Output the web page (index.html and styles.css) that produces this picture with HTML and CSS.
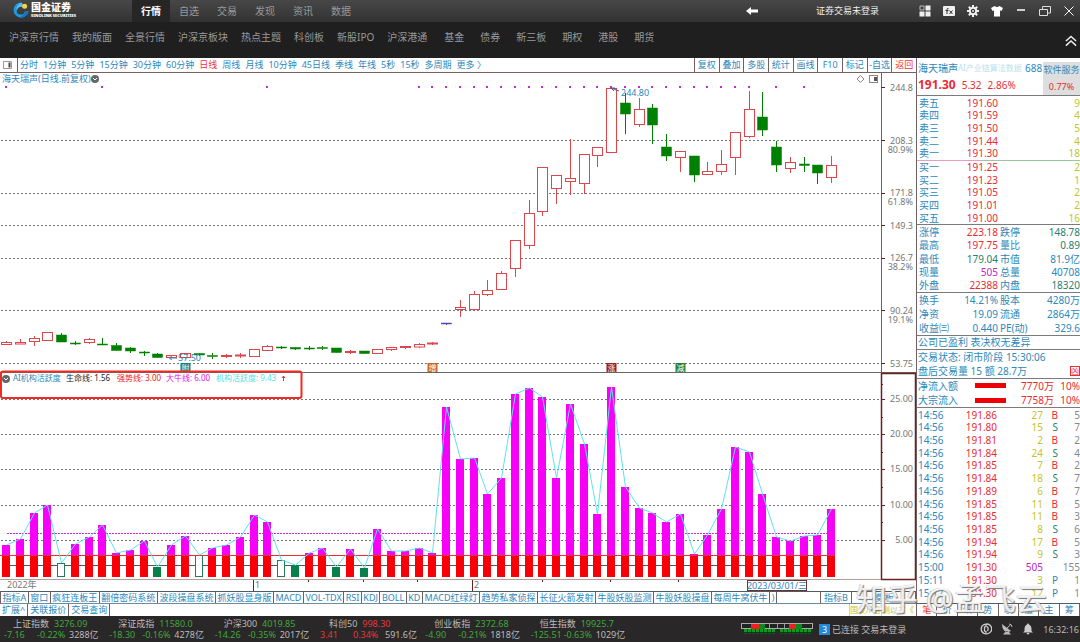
FILE: index.html
```html
<!DOCTYPE html>
<html lang="zh-CN">
<head>
<meta charset="utf-8">
<title>国金证券 - 海天瑞声</title>
<link rel="stylesheet" href="styles.css">
</head>
<body>
<header class="titlebar">
  <div class="brand">
    <svg class="brand-mark" viewBox="0 0 16 16" aria-hidden="true">
      <path d="M8 .5A7.5 7.5 0 1 0 15.5 9L12 9A4.2 4.2 0 1 1 8 4.2Q9 1.500 8 .5Z" fill="#1c9be0"/>
      <path d="M8 .5Q11 2 9 5A4 4 0 0 0 4.500 11Q1 5 8 .5Z" fill="#55c0f4"/>
      <path d="M15.500 9A7.500 7.500 0 0 1 5 15Q11 15 12 9Z" fill="#1477be"/>
      <circle cx="11.600" cy="4.200" r="2.500" fill="#f3d34a"/>
    </svg>
    <div class="brand-text"><strong>国金证券</strong><span>SINOLINK SECURITIES</span></div>
  </div>
  <nav class="main-tabs">
    <a class="active" href="#">行情</a><a href="#">自选</a><a href="#">交易</a><a href="#">发现</a><a href="#">资讯</a><a href="#">数据</a>
  </nav>
  <div class="title-right">
    <button class="icon back" aria-label="返回"><svg viewBox="0 0 12 10"><path d="M0 5L5 1V3.500H12V6.500H5V9Z" fill="#fff"/></svg></button>
    <span class="login">证券交易未登录</span>
    <div class="tools">
      <button class="icon" aria-label="布局"><svg viewBox="0 0 12 12"><path d="M6.500 .5h5v5h-5zM.5 6.500h5v5h-5zM6.500 6.500h5v5h-5z" fill="#eee"/><path d="M1 1h4v4h-4z" fill="none" stroke="#bbb"/></svg></button>
      <button class="icon" aria-label="公式"><svg viewBox="0 0 12 12"><rect y="1" width="12" height="10" rx="1" fill="#eee"/><path d="M5.500 3.500Q4 3 4 4.500V9M2.500 5.500H5.500M6.500 5.500L9.500 9M9.500 5.500L6.500 9" stroke="#333" fill="none"/></svg></button>
      <button class="icon" aria-label="设置"><svg viewBox="0 0 12 12"><circle cx="6" cy="6" r="3.200" fill="none" stroke="#eee" stroke-width="2"/><path d="M6 0V2.500M6 9.500V12M0 6H2.500M9.500 6H12M1.800 1.800L3.500 3.500M8.500 8.500L10.200 10.200M10.200 1.800L8.500 3.500M3.500 8.500L1.800 10.200" stroke="#eee" stroke-width="2"/><circle cx="6" cy="6" r="1" fill="#ddd"/></svg></button>
      <button class="icon" aria-label="皮肤"><svg viewBox="0 0 12 12"><path d="M3.500 1Q6 3 8.500 1L12 3L10.500 6L9 5.500V11.500H3V5.500L1.500 6L0 3Z" fill="#fff"/></svg></button>
      <button class="icon" aria-label="最小化"><svg viewBox="0 0 12 12"><path d="M2 5H10" stroke="#fff" stroke-width="1.500"/></svg></button>
      <button class="icon" aria-label="还原"><svg viewBox="0 0 12 12"><path d="M.5 4.500H8.500V10.500H.5ZM3.500 4V1.500H11.500V8H9" fill="none" stroke="#ddd"/></svg></button>
      <button class="icon" aria-label="关闭"><svg viewBox="0 0 12 12"><path d="M1.500 1.500L10.500 10.500M10.500 1.500L1.500 10.500" stroke="#fff"/></svg></button>
    </div>
  </div>
</header>

<nav class="subnav">
  <div class="group tight"><a href="#">沪深京行情</a><a href="#">我的版面</a><a href="#">全景行情</a><a href="#">沪深京板块</a><a href="#">热点主题</a><a href="#">科创板</a><a href="#">新股IPO</a><a href="#">沪深港通</a></div>
  <div class="group wide"><a href="#">基金</a><a href="#">债券</a><a href="#">新三板</a><a href="#">期权</a><a href="#">港股</a><a href="#">期货</a></div>
  <button class="icon collapse" aria-label="收起"><svg viewBox="0 0 13 12"><path d="M1 6L6.500 1L12 6M1 11L6.500 6L12 11" stroke="#eee" stroke-width="1.600" fill="none"/></svg></button>
</nav>

<main class="workspace">
  <section class="left">
    <div class="periods">
      <button class="panel-toggle" aria-label="侧栏"><svg viewBox="0 0 10 10"><path d="M.5 1.500H8.500V8.500H.5Z" fill="none" stroke="#999"/><path d="M5.500 2.500H7.500V7.500H5.500Z" fill="#444"/></svg></button>
      <div class="period-list">
        <button>分时</button><button>1分钟</button><button>5分钟</button><button>15分钟</button><button>30分钟</button><button>60分钟</button><button class="on">日线</button><button>周线</button><button>月线</button><button>10分钟</button><button>45日线</button><button>季线</button><button>年线</button><button>5秒</button><button>15秒</button><button>多周期</button><button>更多 〉</button>
      </div>
      <div class="actions">
        <button>复权</button><button>叠加</button><button>多股</button><button>统计</button><button>画线</button><button>F10</button><button>标记</button><button>-自选</button><button class="on">返回</button>
      </div>
    </div>
    <svg class="chart" id="chart" viewBox="0 73 916 518" role="img" aria-label="海天瑞声日线与AI机构活跃度"></svg>
    <div class="tabs">
      <div class="tab-list">
        <button>指标A</button><button>窗口</button><button>疯狂连板王</button><button>翻倍密码系统</button><button>波段操盘系统</button><button>抓妖股显身版</button><button>MACD</button><button>VOL-TDX</button><button>RSI</button><button>KDJ</button><button>BOLL</button><button>KD</button><button>MACD红绿灯</button><button>趋势私家侦探</button><button>长征火箭发射</button><button>牛股妖股监测</button><button>牛股妖股操盘</button><button>每周牛窝伏牛</button><button>)</button>
      </div>
      <div class="tab-end"><button>指标B</button><button>模 板</button></div>
    </div>
    <div class="tabs second">
      <div class="ext"><button>扩展^</button><button>关联报价</button><button>交易查询</button></div>
      <div class="ticker"><span>国发//相</span><span>测以主《</span></div>
    </div>
  </section>

  <aside class="quote">
    <div class="head">
      <div class="head-main">
        <div class="name"><b>海天瑞声</b><i>AI产业链算法数据</i><span>688</span></div>
        <div class="price"><strong>191.30</strong><span>5.32</span><span>2.86%</span></div>
      </div>
      <div class="sector"><span>软件服务</span><em>0.77%</em></div>
    </div>
    <div class="sec sell"><table class="book" id="sell"></table></div>
    <div class="sec buy"><table class="book" id="buy"></table></div>
    <div class="sec stats"><table class="facts">
      <tr><th>涨停</th><td class="red">223.18</td><th>跌停</th><td class="teal">148.78</td></tr>
      <tr><th>最高</th><td class="red">197.75</td><th>量比</th><td class="teal">0.89</td></tr>
      <tr><th>最低</th><td class="teal">179.04</td><th>市值</th><td>81.9亿</td></tr>
      <tr><th>现量</th><td class="purple">505</td><th>总量</th><td>40708</td></tr>
      <tr><th>外盘</th><td class="red">22388</td><th>内盘</th><td class="teal">18320</td></tr>
    </table></div>
    <div class="sec basics"><table class="facts">
      <tr><th>换手</th><td>14.21%</td><th>股本</th><td>4280万</td></tr>
      <tr><th>净资</th><td>19.09</td><th>流通</th><td>2864万</td></tr>
      <tr><th>收益㈢</th><td>0.440</td><th>PE(动)</th><td>329.6</td></tr>
    </table></div>
    <div class="sec note"><p>公司已盈利 表决权无差异</p></div>
    <div class="sec state"><p>交易状态: 闭市阶段 15:30:06</p><p class="after">盘后交易量 15 额 28.7万 <span class="badge">凶</span></p></div>
    <div class="sec flow">
      <p><span>净流入额</span><i class="bar"></i><b>7770万</b><b>10%</b></p>
      <p><span>大宗流入</span><i class="bar"></i><b>7758万</b><b>10%</b></p>
    </div>
    <div class="sec ticks"><table id="ticks"></table></div>
    <div class="quote-tabs"><button class="on">笔</button><button>价</button><button>细</button><button>势</button><button>联</button><button>值</button><button>主</button><button>筹</button></div>
  </aside>
  <div class="watermark">知乎 @孟飞云</div>
</main>

<footer class="status">
  <div class="indices" id="indices"></div>
  <svg class="meter" viewBox="0 0 72 12" aria-hidden="true">
    <rect x=".5" y=".5" width="71" height="5" fill="#222" stroke="#aaa"/>
    <rect x="10" y="1" width="8" height="5" fill="#f02020"/><rect x="18" y="1" width="6" height="5" fill="#0a8a1e"/>
    <rect x="48" y="1" width="7" height="5" fill="#f02020"/><rect x="55" y="1" width="6" height="5" fill="#0a8a1e"/>
    <path d="M28.500 1V5M36.500 1V5M43.500 1V5" stroke="#999"/>
    <path d="M3 7.500H34M39 7.500H71" stroke="#0b9a20" stroke-width="3" stroke-dasharray="3 1"/><path d="M3 10.500H34M39 10.500H71" stroke="#0a5c18" stroke-dasharray="3 1"/>
  </svg>
  <div class="conn"><b>3</b><span>已连接 交易未登录</span></div>
  <div class="status-icons">
    <button class="icon" aria-label="客服"><svg viewBox="0 0 12 12"><path d="M4 1.500A5 5 0 0 0 4 10.500L6 11V8.500L4.500 8V4L6 3.500V1ZM6.500 1A4.600 4.600 0 0 1 7 10.800M7 3.500Q9 5 7.500 8" fill="none" stroke="#ccc" stroke-width="1.300"/></svg></button>
    <button class="icon" aria-label="信号"><svg viewBox="0 0 12 12"><path d="M1 1L10 8Q6 10 3 7.500Q1 5 1 1ZM5 8L2 11.500H10L8 9Z" fill="#bbb"/><path d="M6 5L9.500 2M8 1Q11 1 11 4" stroke="#bbb" fill="none"/></svg></button>
    <button class="icon" aria-label="提醒"><svg viewBox="0 0 12 12"><path d="M6 .5Q7 .5 7 1.500Q9.500 2.500 9.500 6V8L11 9.500H1L2.500 8V6Q2.500 2.500 5 1.500Q5 .5 6 .5ZM4.500 10H7.500Q7 11.500 6 11.500Q5 11.500 4.500 10Z" fill="#ccc"/></svg></button>
    <time>16:32:16</time>
  </div>
</footer>
<script src="app.js"></script>
</body>
</html>
```
FILE: styles.css
```css
* { box-sizing: border-box; }
:root {
  --blue: #2c88bb;
  --red: #e92b32;
  --line: #75605f;
  --olive: #c2c42c;
  --teal: #2a8070;
}
body {
  margin: 0;
  min-height: 100vh;
  display: flex;
  flex-direction: column;
  background: #fff;
  color: var(--blue);
  font-family: "Noto Sans", "Noto Sans CJK SC", sans-serif;
  font-size: 10px;
  line-height: 12px;
  overflow: hidden;
}
button {
  margin: 0;
  padding: 0;
  border: 0;
  background: none;
  color: inherit;
  font: inherit;
  white-space: nowrap;
}
a { color: inherit; text-decoration: none; }
p { margin: 0; }
.icon { display: flex; align-items: center; justify-content: center; }
.icon svg { width: 12px; height: 12px; display: block; }

.titlebar {
  display: flex;
  height: 22px;
  background: linear-gradient(#474747, #333);
  color: #999;
}
.brand { display: flex; align-items: center; gap: 2px; width: 132px; padding: 0 0 2px 13px; }
.brand-mark { width: 16px; height: 16px; }
.brand-text { display: flex; flex-direction: column; color: #fff; }
.brand-text strong { font-size: 10px; line-height: 11px; font-weight: 900; }
.brand-text span { font-size: 4px; line-height: 5px; font-weight: 900; }
.main-tabs { display: flex; }
.main-tabs a { width: 38px; line-height: 22px; text-align: center; }
.main-tabs .active { background: #262626; color: #fff; font-weight: 700; }
.title-right { margin-left: auto; display: flex; align-items: center; font-size: 9px; color: #eee; }
.login { margin: 0 40px 0 58px; }
.tools { display: flex; gap: 12px; padding-right: 5px; }

.subnav {
  display: flex;
  align-items: center;
  height: 36px;
  padding: 0 3px 6px 9px;
  background: #1f1f1f;
  color: #999;
}
.group { display: flex; }
.tight { gap: 13px; margin-right: 17px; }
.wide { gap: 16px; }
.collapse { margin-left: auto; padding-top: 8px; }

.workspace { position: relative; flex: 1; display: flex; }
.left { flex: 1; min-width: 0; display: flex; flex-direction: column; }
.periods { display: flex; height: 15px; border-bottom: 1px solid var(--line); font-size: 9px; line-height: 14px; }
.panel-toggle { width: 18px; padding-left: 3px; border-right: 1px solid var(--line); display: flex; align-items: center; }
.panel-toggle svg { width: 10px; height: 10px; }
.period-list { display: flex; justify-content: space-between; flex: 0 1 468px; padding-left: 2px; }
.periods .on { color: #f03038; }
.actions { display: grid; grid-template-columns: repeat(9, 1fr); flex: 0 0 222px; margin-left: auto; }
.actions button { border-left: 1px solid var(--line); }
.chart { width: 100%; height: auto; display: block; flex: 1; }
.chart text { font-family: inherit; }

.tabs { display: flex; justify-content: space-between; height: 12px; border-top: 1px solid #505c65; font-size: 9px; line-height: 11px; }
.tabs button { border-right: 1px solid var(--line); }
.tab-list { display: flex; flex: 0 1 777px; border-left: 1px solid var(--line); }
.tab-list button { flex: 1 1 auto; }
.tab-end { display: grid; grid-template-columns: 31px 64px; border-left: 1px solid var(--line); }
.second { height: 13px; line-height: 12px; border-top-color: #6b8c9c; }
.ext { display: flex; }
.ext button { padding: 0 2px; }
.ticker { display: grid; grid-template-columns: 32px 35px; color: var(--olive); }
.ticker span { border-left: 1px solid #d9da85; white-space: nowrap; font-size: 8px; }

.quote { flex: 0 0 164px; display: flex; flex-direction: column; border-left: 1px solid var(--line); overflow: hidden; }
.head { flex: 38 1 0; display: flex; justify-content: space-between; overflow: hidden; }
.head-main { min-width: 0; padding: 4px 0 0 1px; }
.name { display: flex; white-space: nowrap; }
.name b { font-weight: 400; }
.name i { width: 67px; font-style: normal; font-size: 8px; color: #b9e3ec; }
.price { display: flex; align-items: center; gap: 6px; padding-top: 5px; color: var(--red); }
.price strong { font-size: 12px; }
.sector { display: flex; flex-direction: column; justify-content: space-between; flex: 0 0 37px; margin-top: 4px; padding: 2px 0; background: #dedede; text-align: center; font-size: 9px; white-space: nowrap; }
.sector em { font-style: normal; color: var(--red); }
.sec { display: grid; border-top: 1px solid #7b7b7b; min-height: 0; }
table { width: 100%; border-collapse: collapse; }
th, td { padding: 0; font-weight: 400; line-height: 12px; white-space: nowrap; }
th { text-align: left; }
td { text-align: right; }
.sell { flex: 65 1 0; }
.buy { flex: 65 1 0; border-image: linear-gradient(90deg, #ee9cba 40%, #9bc79b 40%) 1; }
.stats { flex: 68 1 0; }
.basics { flex: 43 1 0; }
.note { flex: 13 1 0; }
.state, .flow { flex: 29 1 0; }
.ticks { flex: 195 1 0; padding-bottom: 4px; }
.book th, .facts th:first-child { padding-left: 2px; }
.book td:nth-child(2) { width: 46px; color: var(--red); }
.book td:nth-child(3) { color: var(--olive); }
.book th { width: 35px; }
.facts { table-layout: fixed; }
.facts th:first-child { width: 32px; }
.facts td:nth-child(2) { width: 49px; }
.facts th:nth-child(3) { width: 36px; padding-left: 2px; }
.red { color: var(--red); }
.teal { color: var(--teal); }
.purple { color: #bb28c4; }
.note p, .state p { align-self: center; padding-left: 1px; }
.after { display: flex; justify-content: space-between; align-items: center; }
.badge { font-size: 8px; line-height: 8px; color: var(--red); border: 1px solid; }
.flow p { display: grid; grid-template-columns: 58px 31px 48px 26px; align-items: center; color: var(--red); text-align: right; }
.flow span { color: var(--blue); text-align: left; padding-left: 1px; }
.flow b { font-weight: 400; }
.bar { height: 5px; background: #ee0008; }
#ticks { table-layout: fixed; }
#ticks th { width: 36px; padding-left: 1px; }
#ticks td:nth-child(2) { width: 44px; color: var(--red); }
#ticks td:nth-child(3) { width: 46px; color: var(--olive); }
#ticks td:nth-child(4) { width: 15px; }
#ticks td:nth-child(5) { color: #888; }
#ticks td.big { color: #bb28c4; }
#ticks .B { color: var(--red); }
#ticks .S { color: var(--teal); }
.quote-tabs { display: grid; grid-template-columns: repeat(8, 1fr); flex: 0 0 13px; border-top: 1px solid #505c65; font-size: 9px; }
.quote-tabs button { border-right: 1px solid var(--line); }
.quote-tabs .on { color: #f02020; }

.watermark {
  position: absolute;
  right: 33px;
  bottom: 2px;
  color: rgba(255, 255, 255, .85);
  font-size: 31px;
  line-height: 32px;
  text-shadow: 1px 1px 1px #777, -1px 0 1px #ccc;
  pointer-events: none;
}

.status { display: flex; align-items: center; height: 26px; background: #292728; color: #bbb; font-size: 9px; line-height: 11px; }
.indices { display: grid; grid-template-columns: repeat(6, 1fr); flex: 0 0 632px; }
.index { display: flex; flex-direction: column; padding-left: 4px; }
.index div { display: flex; }
.index .top { gap: 5px; padding-left: 9px; }
.index .bottom { display: grid; grid-template-columns: 31px 30px 1fr; gap: 2px; }
.up { color: #e8363a; }
.down { color: #40a83c; }
.meter { width: 72px; height: 12px; margin-left: 109px; }
.conn { display: flex; gap: 2px; margin-left: 6px; }
.conn b { width: 11px; background: #2188dc; color: #fff; text-align: center; font-weight: 400; }
.status-icons { display: flex; align-items: center; gap: 9px; margin-left: auto; padding-right: 1px; }
```
FILE: app.js
```js
const STEP = 13.75;
const cx = i => Math.round(6 + STEP * i) + 0.5;

// kind, body top, body bottom, wick top, wick bottom
const candles = [
  ["r",342.5,344.5,341,345],["r",342.5,344,339,344],["r",338.5,341.5,336,346],["r",332.5,340.5,332,341],
  ["g",335,342,333,342],["g",343,344,341,345],["r",339.5,342.5,338,344],["g",344,345,338,345],
  ["g",345.5,350.5,343,351],["g",348,351,347,353],["g",352,353,351,356],["g",354,357.5,353,358],
  ["r",355.5,357.5,355,358],["r",353.5,357.5,353,359],["g",353.5,355,353,356],["g",355.5,356.5,353,359],
  ["r",355.5,356.5,354,358],["r",355,356,353,358],["r",349.5,356.5,349,357],["r",346.5,350.5,345,351],
  ["g",347,348,346,349],["g",347.5,349,347,350],["g",348,349,346,350],["g",347.5,348.5,346,350],
  ["g",348,352.5,348,353],["r",351.5,352.5,350,354],["g",351,353.5,351,354],["r",349.5,353.5,349,354],
  ["r",347.5,349.5,347,351],["r",346.5,347.5,346,349],["r",344.5,347,343,348],["r",343,344,342,345],
  ["b",323,324,323,325],["r",307.5,309.5,300,317],["r",294.5,309.5,291,311],["r",290.5,294.5,280,296],
  ["r",273.5,289.5,271,290],["r",240.5,268.5,240,277],["r",213.5,245.5,200,249],["r",167.5,211.5,167,216],
  ["r",175.5,188.5,175,204],["r",178.5,181.5,139,195],["r",154.5,183.5,154,194],["r",147.5,155.5,147,167],
  ["r",88.5,152.5,88,153],["g",103,114,93,134],["r",109.5,124.5,98,127],["g",108,125,104,144],
  ["g",147,156,134,161],["r",151.5,157.5,151,172],["g",156,175,156,182],["r",171.5,174.5,162,175],
  ["r",164.5,171.5,150,175],["r",132.5,157.5,132,175],["r",109.5,136.5,91,138],["g",117,130,92,136],
  ["g",147,165,141,172],["r",162.5,168.5,157,173],["g",164,165.5,157,172],["g",165,173,165,184],["r",165.5,177.5,156,183]
];

// top edge of each activity bar
const tops = [545,539,513,505,563,544,537,525,553,550,541,567,545,536,555,548,545,537,515,522,560,565,553,548,567,549,568,529,551,551,548,553,
  407,459,458,494,478,394,388,397,478,404,444,514,387,487,508,513,522,514,554,535,509,447,452,494,537,541,536,535,509];
const hollow = [4, 14, 20];
const solid = [11, 21, 24, 26];
const BASE = 576, STRONG = 555;

const out = [];
const line = (x1, y1, x2, y2, stroke, extra = "") => out.push(`<line x1="${x1}" y1="${y1}" x2="${x2}" y2="${y2}" stroke="${stroke}" ${extra}/>`);
const rect = (x, y, w, h, fill, extra = "") => out.push(`<rect x="${x}" y="${y}" width="${w}" height="${h}" fill="${fill}" ${extra}/>`);
const text = (x, y, s, fill, size = 9, extra = "") => out.push(`<text x="${x}" y="${y}" fill="${fill}" font-size="${size}" ${extra}>${s}</text>`);

[140.5, 193.5, 225.5, 258.5, 310.5, 363.5, 399.5, 434.5, 469.5, 505.5, 540.5].forEach(y =>
  line(1, y, 881, y, "#777", 'stroke-dasharray="2 2"'));

// price panel
const INK = { r: "#dc474c", g: "#008000", b: "#4b4ba8" };
candles.forEach(([k, t, b, h, l], i) => {
  const x = cx(i), c = INK[k];
  if (h < t) line(x, h, x, t, c);
  if (l > b) line(x, b, x, l, c);
  rect(x - 5, t, 10, b - t, k === "r" ? "#fff" : c, `stroke="${c}" stroke-width="${k === "r" ? 1 : 0.5}"`);
});
const marks = [0, 7, 19, 56, 58];
for (let i = 30; i <= 54; i++) marks.push(i);
marks.forEach(i => rect(cx(i) - 1.5, 86, 2, 2, "#c22bd0"));
text(2, 82, "海天瑞声(日线.前复权)", "#2c88bb");
out.push('<circle cx="95" cy="79" r="4" fill="#666"/><path d="M93 78L95 80L97 78" stroke="#fff" fill="none"/>');
out.push('<path d="M860.500 75.500L864 79L860.500 82.500L857 79Z" fill="none" stroke="#888"/>');
rect(869.5, 75.5, 8, 7, "none", 'stroke="#888"');
rect(874, 77, 3, 4, "#555");
text(621, 96, "244.80", "#2c88bb");
out.push('<path d="M611 88L619 91M611 88L615 88M611 88L614 91" stroke="#5a5a90" fill="none"/>');
text(178, 361, "57.50", "#2c88bb");
out.push('<path d="M169 358H177M169 358L172 356M169 358L172 360" stroke="#4f80b0" fill="none"/>');
[[13, "附", "#11808c"], [31, "增", "#c7662c"], [44, "涨", "#991c20"], [49, "减", "#23823a"]].forEach(([i, s, c]) => {
  rect(cx(i) - 5, 363, 10, 10, c);
  text(cx(i), 371, s, "#fff", 8, 'text-anchor="middle"');
});

// activity panel
line(0, 372.5, 916, 372.5, "#666");
line(7, 533.5, 835, 533.5, "#cc2ad2", 'stroke-dasharray="2 1"');
line(8, 565.5, 835, 565.5, "#555");
tops.forEach((t, i) => {
  const x = cx(i) - 4.5;
  if (hollow.includes(i)) rect(x + 0.5, t + 0.5, 7, BASE - t, "#fff", 'stroke="#267a58"');
  else if (solid.includes(i)) rect(x, t, 8, BASE - t + 1, "#08804a");
  else {
    if (t < STRONG) rect(x, t, 8, STRONG - t, "#f800f8");
    rect(x, STRONG, 8, BASE - STRONG + 1, "#f80008");
  }
});
line(0, 555.5, 835, 555.5, "#e23034");
out.push(`<polyline points="${tops.map((t, i) => cx(i) + "," + t).join(" ")}" fill="none" stroke="#5fe3ee"/>`);

rect(1, 371.5, 300.5, 26.5, "none", 'stroke="#ef2b22" stroke-width="2" rx="2"');
out.push('<circle cx="6" cy="379" r="4" fill="#666"/><path d="M4 378L6 380L8 378" stroke="#fff" fill="none"/>');
text(13, 381, "AI机构活跃度", "#2c88bb", 8);
text(66, 381, "生命线: 1.56", "#222", 8);
text(117, 381, "强势线: 3.00", "#f01818", 8);
text(166, 381, "大牛线: 6.00", "#e312e3", 8);
text(216, 381, "机构活跃度: 9.43", "#55e0e6", 8);
out.push('<path d="M283.500 381V376M282 378L283.500 376L285 378" stroke="#e23034" fill="none"/>');

// axes
line(881.5, 73, 881.5, 373, "#8b5555");
rect(881.5, 373.5, 34, 206, "none", 'stroke="#6e2020" stroke-width="1.500"');
[["244.8", 91], ["208.3", 144], ["80.9%", 153], ["171.8", 196], ["61.8%", 205], ["149.3", 229], ["126.7", 261], ["38.2%", 270],
 ["90.24", 314], ["19.1%", 323], ["53.75", 367], ["25.00", 402], ["20.00", 437], ["15.00", 472], ["10.00", 508], ["5.00", 543]]
  .forEach(([s, y]) => text(913, y, s, "#777", 9, 'text-anchor="end"'));
[87.5, 140.5, 193.5, 225.5, 258.5, 310.5, 363.5, 399.5, 434.5, 469.5, 505.5, 540.5].forEach(y => line(881, y, 885, y, "#6e2020"));
[384.5, 417.5, 452.5, 487.5, 522.5].forEach(y => line(881, y, 883, y, "#6e2020"));
line(0, 579.5, 881, 579.5, "#b79a9a");
[308, 363, 417, 542, 610, 678].forEach(x => line(x + 0.5, 580, x + 0.5, 582, "#6e2020"));
[253, 472].forEach(x => line(x + 0.5, 580, x + 0.5, 591, "#6e2020"));
text(7, 588, "2022年", "#777");
text(255, 588, "1", "#777");
text(474, 588, "2", "#777");
rect(747.5, 580.5, 59, 10, "#fff", 'stroke="#6e3030"');
text(777, 588.5, "2023/03/01/三", "#2c88bb", 9, 'text-anchor="middle"');
document.getElementById("chart").innerHTML = out.join("");

// order book and trades
const book = (id, rows) => document.getElementById(id).innerHTML =
  rows.map(([n, p, v]) => `<tr><th>${n}</th><td>${p}</td><td>${v}</td></tr>`).join("");
book("sell", [["卖五","191.60",9],["卖四","191.59",4],["卖三","191.50",5],["卖二","191.44",4],["卖一","191.30",18]]);
book("buy", [["买一","191.25",2],["买二","191.23",1],["买三","191.05",2],["买四","191.01",2],["买五","191.00",16]]);

document.getElementById("ticks").innerHTML = [
  ["14:56","191.86",27,"B",5],["14:56","191.80",15,"S",7],["14:56","191.81",2,"B",2],["14:56","191.84",24,"S",4],
  ["14:56","191.85",7,"B",2],["14:56","191.84",18,"S",7],["14:56","191.89",6,"B",7],["14:56","191.85",11,"B",5],
  ["14:56","191.85",11,"B",3],["14:56","191.85",8,"S",6],["14:56","191.94",17,"B",5],["14:56","191.94",9,"S",3],
  ["15:00","191.30",505,"",155],["15:11","191.30",3,"P",1],["15:12","191.30",12,"P",1]
].map(([t, p, v, s, n]) => `<tr><th>${t}</th><td>${p}</td><td class="${v > 100 ? "big" : ""}">${v}</td><td class="${s}">${s}</td><td>${n}</td></tr>`).join("");

document.getElementById("indices").innerHTML = [
  ["上证指数","3276.09","-7.16","-0.22%","3288亿"],["深证成指","11580.0","-18.30","-0.16%","4278亿"],
  ["沪深300","4019.85","-14.26","-0.35%","2017亿"],["科创50","998.30","3.41","0.34%","591.6亿"],
  ["创业板指","2372.68","-4.90","-0.21%","1818亿"],["恒生指数","19925.7","-125.51","-0.63%","1029亿"]
].map(([n, v, d, p, a]) => {
  const c = d[0] === "-" ? "down" : "up";
  return `<div class="index"><div class="top"><span>${n}</span><span class="${c}">${v}</span></div><div class="bottom"><span class="${c}">${d}</span><span class="${c}">${p}</span><span>${a}</span></div></div>`;
}).join("");
```
